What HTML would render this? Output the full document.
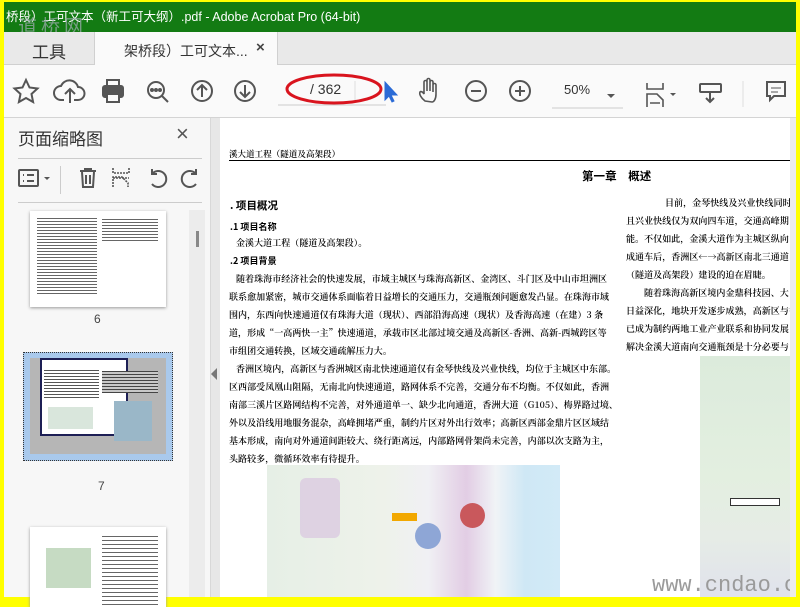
<!DOCTYPE html>
<html><head><meta charset="utf-8"><style>
*{margin:0;padding:0;box-sizing:border-box}
body{width:800px;height:600px;overflow:hidden;background:#ffff00;position:relative;font-family:"Liberation Sans","Noto Sans CJK SC",sans-serif}
.abs{position:absolute}
#title{left:4px;top:2px;width:792px;height:30px;background:#137b13;color:#fff;font-size:12.5px;line-height:30px;padding-left:2px;white-space:nowrap;overflow:hidden}
#tabs{left:4px;top:32px;width:792px;height:33px;background:#e9e9e9;border-bottom:1px solid #d0d0d0}
#tb{left:4px;top:65px;width:792px;height:53px;background:#fafafa;border-bottom:1px solid #d4d4d4}
#left{left:4px;top:118px;width:206px;height:479px;background:#f7f7f7}
#sep{left:210px;top:118px;width:10px;height:479px;background:#e7e7e7;border-left:1px solid #d8d8d8}
#doc{left:220px;top:118px;width:570px;height:479px;background:#fff;overflow:hidden}
#sb{left:790px;top:118px;width:6px;height:479px;background:#ececec}
.t{position:absolute;font-family:"Noto Serif CJK SC","Liberation Serif",serif;font-size:9px;color:#000;white-space:nowrap;letter-spacing:0.05px;font-weight:600}
.b{font-weight:bold}
svg{position:absolute}
</style></head><body>
<div id="title" class="abs">桥段）工可文本（新工可大纲）.pdf - Adobe Acrobat Pro (64-bit)</div>
<div class="abs" style="left:18px;top:12px;color:#9aa;font-size:19px;opacity:.75;letter-spacing:4px">道桥网</div>
<div id="tabs" class="abs">
 <div class="abs" style="left:28px;top:6px;font-size:17px;color:#333">工具</div>
 <div class="abs" style="left:90px;top:0;width:184px;height:34px;background:#fafafa;border-left:1px solid #d0d0d0;border-right:1px solid #d0d0d0"></div>
 <div class="abs" style="left:120px;top:9px;font-size:14px;color:#333">架桥段）工可文本...</div>
 <div class="abs" style="left:252px;top:7px;font-size:15px;color:#444;font-weight:bold">×</div>
</div>
<div id="tb" class="abs"></div>
<svg style="left:0;top:65px" width="800" height="53" fill="none" stroke="#555" stroke-width="2">
 <path d="M26 15l3.5 7.5 8 1-6 5.5 1.6 8-7.1-4-7.1 4 1.6-8-6-5.5 8-1z"/>
 <path d="M64 35h-3a7 7 0 0 1 0-14 9 9 0 0 1 17 1 6 6 0 0 1 0 13h-4M70 38V24m-5 5l5-5 5 5"/>
 <rect x="103" y="21" width="20" height="11" rx="2" fill="#555"/><rect x="107" y="15" width="12" height="6"/><rect x="107" y="29" width="12" height="8" fill="#fafafa"/>
 <circle cx="156" cy="25" r="8"/><path d="M162 31l6 6"/><circle cx="152" cy="25" r="1" fill="#555"/><circle cx="156" cy="25" r="1" fill="#555"/><circle cx="160" cy="25" r="1" fill="#555"/>
 <circle cx="202" cy="26" r="10"/><path d="M202 32V20m-5 5l5-5 5 5"/>
 <circle cx="245" cy="26" r="10"/><path d="M245 20v12m-5-5l5 5 5-5"/>
 <path d="M278 40h108" stroke="#ccc" stroke-width="1"/>
 <path d="M355 16v20" stroke="#ddd" stroke-width="1"/>
 <path d="M385 17v18l4-4 3 6 2-1-3-6h6z" fill="#2b6bd6" stroke="#2b6bd6" stroke-width="1"/>
 <path d="M425 36c-4-3-6-7-5-9 1-1 3 0 4 2v-12a1.5 1.5 0 0 1 3 0v9-11a1.5 1.5 0 0 1 3 0v11-9a1.5 1.5 0 0 1 3 0v10-7a1.5 1.5 0 0 1 3 0v9c0 5-2 8-4 8z" stroke-width="1.6"/>
 <circle cx="476" cy="26" r="10"/><path d="M471 26h10"/>
 <circle cx="520" cy="26" r="10"/><path d="M515 26h10M520 21v10"/>
 <path d="M552 43h71" stroke="#ccc" stroke-width="1"/>
 <path d="M607 29l4 4 4-4z" fill="#555" stroke="none"/>
 <path d="M647 18v6h16v-6M647 42v-13h10l6 6v7M650 38h10" stroke-width="1.6"/>
 <path d="M670 28l3 3 3-3z" fill="#555" stroke="none"/>
 <rect x="700" y="19" width="21" height="8" rx="1"/><path d="M710 27v10m-4-4l4 4 4-4"/>
 <path d="M743 16v26" stroke="#ddd" stroke-width="1"/>
 <path d="M767 17h18v14h-11l-4 4v-4h-3z"/><path d="M771 23h10M771 27h7" stroke-width="1"/>
</svg>
<div class="abs" style="left:310px;top:81px;font-size:14px;color:#333">/ 362</div>
<svg style="left:284px;top:72px" width="100" height="34"><ellipse cx="50" cy="17" rx="47" ry="14" fill="none" stroke="#d9141e" stroke-width="3"/></svg>
<div class="abs" style="left:564px;top:82px;font-size:13px;color:#333">50%</div>

<div id="left" class="abs">
 <div class="abs" style="left:14px;top:7px;font-size:17px;color:#333">页面缩略图</div>
 <div class="abs" style="left:172px;top:3px;font-size:22px;color:#555">×</div>
 <div class="abs" style="left:14px;top:40px;width:184px;height:1px;background:#ccc"></div>
 <div class="abs" style="left:14px;top:84px;width:184px;height:1px;background:#ccc"></div>
 <div class="abs" style="left:56px;top:48px;width:1px;height:28px;background:#ccc"></div>
 <div class="abs" style="left:185px;top:92px;width:16px;height:387px;background:#ececec"></div>
 <div class="abs" style="left:192px;top:113px;width:3px;height:16px;background:#888"></div>
 <div class="abs" style="left:26px;top:93px;width:136px;height:96px;background:#fff;box-shadow:0 1px 3px #999"></div>
 <div class="abs" style="left:33px;top:100px;width:60px;height:78px;background:repeating-linear-gradient(#666 0 1px,#fff 1px 3px)"></div>
 <div class="abs" style="left:98px;top:101px;width:56px;height:22px;background:repeating-linear-gradient(#666 0 1px,#fff 1px 3px)"></div>
 <div class="abs" style="left:90px;top:194px;font-size:12px;color:#444">6</div>
 <div class="abs" style="left:19px;top:234px;width:150px;height:109px;background:#a9c9ec;border:1px dotted #333"></div>
 <div class="abs" style="left:26px;top:240px;width:136px;height:96px;background:#b6b6b6"></div>
 <div class="abs" style="left:36px;top:240px;width:88px;height:78px;background:#fff;border:2px solid #1d1f55"></div>
 <div class="abs" style="left:40px;top:252px;width:55px;height:30px;background:repeating-linear-gradient(#555 0 1px,#fff 1px 3px)"></div>
 <div class="abs" style="left:98px;top:253px;width:56px;height:22px;background:repeating-linear-gradient(#444 0 1px,#c8c8c8 1px 3px)"></div>
 <div class="abs" style="left:44px;top:289px;width:45px;height:22px;background:#d9e6dc"></div>
 <div class="abs" style="left:110px;top:283px;width:38px;height:40px;background:#9ab7c8"></div>
 <div class="abs" style="left:94px;top:361px;font-size:12px;color:#444">7</div>
 <div class="abs" style="left:26px;top:409px;width:136px;height:80px;background:#fff;box-shadow:0 1px 3px #999"></div>
 <div class="abs" style="left:42px;top:430px;width:45px;height:40px;background:#c6dbc3"></div>
 <div class="abs" style="left:98px;top:418px;width:56px;height:70px;background:repeating-linear-gradient(#666 0 1px,#fff 1px 4px)"></div>
</div>
<svg style="left:0;top:160px" width="210" height="40" fill="none" stroke="#555" stroke-width="2">
 <rect x="19" y="10" width="19" height="16" rx="1"/><path d="M23 15h1M27 15h7M23 21h1M27 21h7"/><path d="M44 17l3 3 3-3z" fill="#555" stroke="none"/>
 <path d="M80 11h16M85 11v-2h6v2M82 12l1 15h10l1-15M86 15v9M90 15v9"/>
 <path d="M113 8v5h16v-5M113 27v-10h9l6 6v4M113 18h16" stroke-width="1.6" stroke-dasharray="2 1"/>
 <path d="M152 24a8 8 0 1 0 0-10M152 9v5h5"/>
 <path d="M196 24a8 8 0 1 1 0-10M196 9v5h-5"/>
</svg>
<div id="sep" class="abs"><div class="abs" style="left:0;top:250px;width:0;height:0;border-top:6px solid transparent;border-bottom:6px solid transparent;border-right:6px solid #777"></div></div>
<div id="doc" class="abs">
 <div class="t" style="left:9px;top:30px;font-size:8.5px">溪大道工程（隧道及高架段）</div>
 <div class="abs" style="left:9px;top:42px;width:570px;height:1px;background:#000"></div>
 <div class="t b" style="left:362px;top:50px;font-size:11.5px;font-family:'Noto Sans CJK SC',sans-serif">第一章　概述</div>
 <div class="t b" style="left:10px;top:80px;font-size:10.5px;font-family:'Noto Sans CJK SC',sans-serif">. 项目概况</div>
 <div class="t b" style="left:10px;top:102px;font-family:'Noto Sans CJK SC',sans-serif">.1 项目名称</div>
 <div class="t" style="left:16px;top:118px">金溪大道工程（隧道及高架段）。</div>
 <div class="t b" style="left:10px;top:136px;font-family:'Noto Sans CJK SC',sans-serif">.2 项目背景</div>
 <div class="t" style="left:16px;top:154px">随着珠海市经济社会的快速发展，市域主城区与珠海高新区、金湾区、斗门区及中山市坦洲区</div>
 <div class="t" style="left:9px;top:172px">联系愈加紧密，城市交通体系面临着日益增长的交通压力，交通瓶颈问题愈发凸显。在珠海市域</div>
 <div class="t" style="left:9px;top:190px">围内，东西向快速通道仅有珠海大道（现状）、西部沿海高速（现状）及香海高速（在建）3 条</div>
 <div class="t" style="left:9px;top:208px">道，形成“一高两快一主”快速通道，承载市区北部过境交通及高新区-香洲、高新-西城跨区等</div>
 <div class="t" style="left:9px;top:226px">市组团交通转换，区域交通疏解压力大。</div>
 <div class="t" style="left:16px;top:244px">香洲区境内，高新区与香洲城区南北快速通道仅有金琴快线及兴业快线，均位于主城区中东部。</div>
 <div class="t" style="left:9px;top:262px">区西部受凤凰山阻隔，无南北向快速通道，路网体系不完善，交通分布不均衡。不仅如此，香洲</div>
 <div class="t" style="left:9px;top:280px">南部三溪片区路网结构不完善，对外通道单一、缺少北向通道，香洲大道（G105）、梅界路过境、</div>
 <div class="t" style="left:9px;top:298px">外以及沿线用地服务混杂，高峰拥堵严重，制约片区对外出行效率；高新区西部金鼎片区区域结</div>
 <div class="t" style="left:9px;top:316px">基本形成，南向对外通道间距较大、绕行距离远，内部路网骨架尚未完善，内部以次支路为主，</div>
 <div class="t" style="left:9px;top:334px">头路较多，微循环效率有待提升。</div>
 <div class="t" style="left:445px;top:78px">目前，金琴快线及兴业快线同时承载</div>
 <div class="t" style="left:406px;top:96px">且兴业快线仅为双向四车道，交通高峰期</div>
 <div class="t" style="left:406px;top:114px">能。不仅如此，金溪大道作为主城区纵向</div>
 <div class="t" style="left:406px;top:132px">成通车后，香洲区←→高新区南北三通道</div>
 <div class="t" style="left:406px;top:150px">（隧道及高架段）建设的迫在眉睫。</div>
 <div class="t" style="left:424px;top:168px">随着珠海高新区境内金鼎科技园、大</div>
 <div class="t" style="left:406px;top:186px">日益深化，地块开发逐步成熟，高新区与香</div>
 <div class="t" style="left:406px;top:204px">已成为制约两地工业产业联系和协同发展</div>
 <div class="t" style="left:406px;top:222px">解决金溪大道南向交通瓶颈是十分必要与</div>
 <div class="abs" style="left:47px;top:347px;width:293px;height:132px;background:linear-gradient(90deg,#e6efe6 0,#eef2ea 40%,#f0f0f4 55%,#e2cde4 68%,#f0f3f6 78%,#cfe8f5 88%,#d2eaf7 100%)"></div>
 <div class="abs" style="left:80px;top:360px;width:40px;height:60px;background:#d9c5e0;opacity:.7;border-radius:6px"></div>
 <div class="abs" style="left:195px;top:405px;width:26px;height:26px;border-radius:50%;background:#8ea6d6"></div>
 <div class="abs" style="left:240px;top:385px;width:25px;height:25px;border-radius:50%;background:#c9585c"></div>
 <div class="abs" style="left:172px;top:395px;width:25px;height:8px;background:#f2a800"></div>
 <div class="abs" style="left:480px;top:238px;width:90px;height:241px;background:linear-gradient(#dcebdc,#e3efe0 50%,#e6ece6 75%,#e0e2ec)"></div>
 <div class="abs" style="left:510px;top:380px;width:50px;height:8px;background:#fff;border:1px solid #333"></div>
 <div class="abs" style="left:432px;top:455px;color:#9a9a9a;font-family:'Liberation Mono',monospace;font-size:22px;white-space:nowrap">www.cndao.com</div>
</div>
<div id="sb" class="abs"></div>
</body></html>
